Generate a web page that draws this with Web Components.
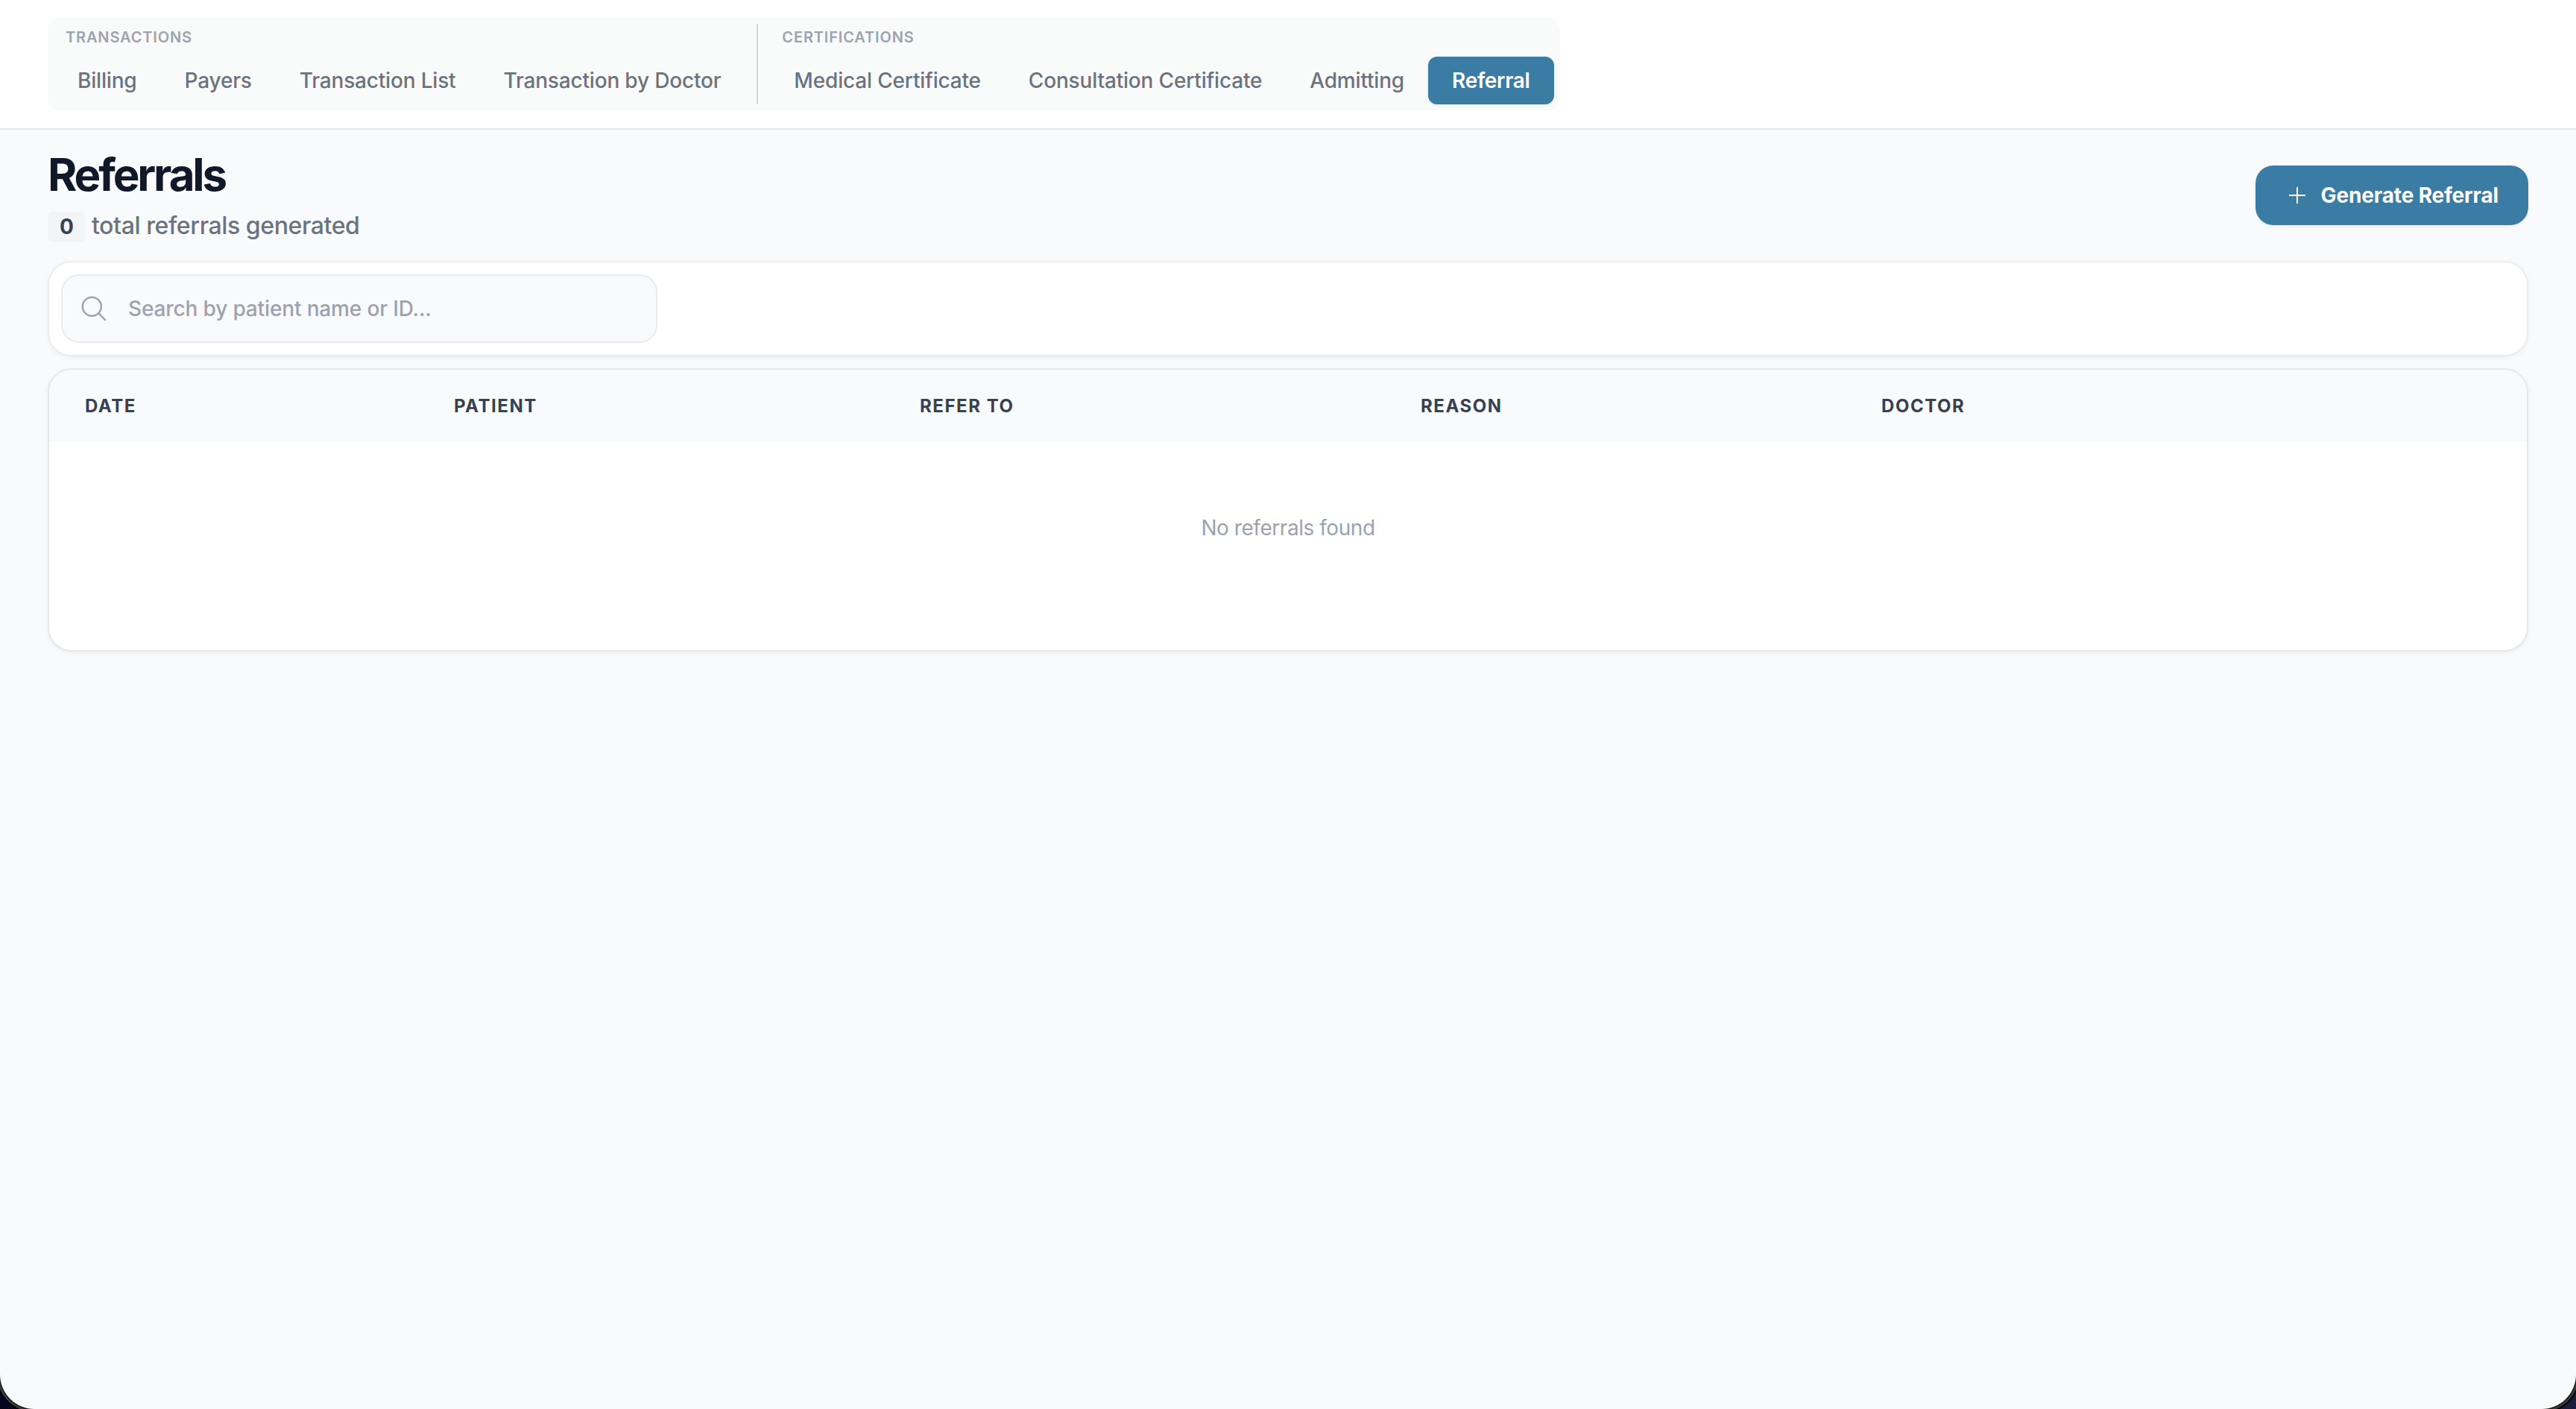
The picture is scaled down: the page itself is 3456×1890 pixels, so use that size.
<!DOCTYPE html>
<html lang="en">
<head>
<meta charset="utf-8">
<title>Referrals</title>
<style>
    html, body {
        height: 100%;
        margin: 0;
    }

    body {
        background: linear-gradient(90deg, #05051f, #1b1d3c);
        font-family: Inter, "Liberation Sans", sans-serif;
        overflow: hidden;
    }
</style>
</head>
<body>
<app-window>
    <top-nav slot="nav">
        <nav-group label="Transactions">
            <nav-tab>Billing</nav-tab>
            <nav-tab>Payers</nav-tab>
            <nav-tab>Transaction List</nav-tab>
            <nav-tab>Transaction by Doctor</nav-tab>
        </nav-group>
        <nav-group label="Certifications">
            <nav-tab>Medical Certificate</nav-tab>
            <nav-tab>Consultation Certificate</nav-tab>
            <nav-tab>Admitting</nav-tab>
            <nav-tab active>Referral</nav-tab>
        </nav-group>
    </top-nav>
    <page-header count="0">
        Referrals
        <span slot="summary">total referrals generated</span>
        <action-button slot="action">Generate Referral</action-button>
    </page-header>
    <filter-bar>
        <search-field>Search by patient name or ID...</search-field>
    </filter-bar>
    <referral-table></referral-table>
</app-window>

<script>
class AppWindow extends HTMLElement {

    constructor() {
        super();
        this.shadowDOM = this.attachShadow({mode: "open"});
    }

    connectedCallback(){
        this.shadowDOM.innerHTML = `
       <style>
       :host {
           display: flex;
           flex-direction: column;
           box-sizing: border-box;
           height: 100vh;
           background: #f9fafc;
           border-radius: 0 0 46px 46px;
           box-shadow: 0 0 0 1px #000, 0 0 0 4px #3a3b3e, 0 0 0 6px #000;
           overflow: hidden;
       }

       main {
           display: flex;
           flex-direction: column;
           gap: 16px;
           padding: 26px 64px 0;
       }
       </style>
       <slot name="nav"></slot>
       <main><slot></slot></main>
       `;
    }
}

class TopNav extends HTMLElement {

    constructor() {
        super();
        this.shadowDOM = this.attachShadow({mode: "open"});
    }

    connectedCallback(){
        this.shadowDOM.innerHTML = `
       <style>
       :host {
           display: flex;
           padding: 24px 64px;
           background: #fff;
           border-bottom: 2px solid #e5e7eb;
       }

       nav {
           display: flex;
           padding: 8px;
           border-radius: 16px;
           background: #f9fbfa;
       }

       ::slotted(nav-group:not(:first-child)) {
           margin-left: 16px;
           padding-left: 16px;
           border-left: 2px solid #d1d5db;
       }
       </style>
       <nav><slot></slot></nav>
       `;
    }
}

class NavGroup extends HTMLElement {

    constructor() {
        super();
        this.shadowDOM = this.attachShadow({mode: "open"});
    }

    connectedCallback(){
        this.shadowDOM.innerHTML = `
       <style>
       :host {
           display: flex;
           flex-direction: column;
           gap: 8px;
       }

       .label {
           padding: 0 16px;
           font-size: 20px;
           font-weight: 600;
           line-height: 36px;
           letter-spacing: .85px;
           text-transform: uppercase;
           color: #9ca3af;
       }

       .tabs {
           display: flex;
       }
       </style>
       <div class="label">${this.getAttribute("label")}</div>
       <div class="tabs"><slot></slot></div>
       `;
    }
}

class NavTab extends HTMLElement {

    constructor() {
        super();
        this.shadowDOM = this.attachShadow({mode: "open"});
    }

    connectedCallback(){
        this.shadowDOM.innerHTML = `
       <style>
       :host {
           display: block;
           padding: 0 32px;
           border-radius: 12px;
           font-size: 28px;
           font-weight: 500;
           line-height: 64px;
           letter-spacing: -.18px;
           white-space: nowrap;
           color: #6b7280;
           cursor: pointer;
       }

       :host([active]) {
           background: #3b7ca5;
           color: #fff;
           font-weight: 600;
           letter-spacing: -.3px;
           box-shadow: 0 2px 4px rgba(0, 0, 0, .05);
       }
       </style>
       <slot></slot>
       `;
    }
}

class PageHeader extends HTMLElement {

    constructor() {
        super();
        this.shadowDOM = this.attachShadow({mode: "open"});
    }

    connectedCallback(){
        this.shadowDOM.innerHTML = `
       <style>
       :host {
           display: flex;
           align-items: center;
           justify-content: space-between;
           height: 124px;
           margin-bottom: 10px;
       }

       h1 {
           margin: 0;
           font-size: 60px;
           font-weight: 700;
           line-height: 70px;
           letter-spacing: -3.1px;
           color: #111827;
       }

       .summary {
           display: flex;
           align-items: baseline;
           gap: 8px;
           margin: 10px 0 -2px;
           font-size: 32px;
           font-weight: 500;
           line-height: 48px;
           letter-spacing: -.4px;
           color: #6b7280;
       }

       .count {
           padding: 0 16px;
           border-radius: 8px;
           background: #f3f4f6;
           font-size: 28px;
           font-weight: 700;
           line-height: 41px;
           letter-spacing: 0;
           color: #374151;
       }
       </style>
       <div>
           <h1><slot></slot></h1>
           <div class="summary">
               <span class="count">${this.getAttribute("count")}</span>
               <slot name="summary"></slot>
           </div>
       </div>
       <slot name="action"></slot>
       `;
    }
}

class ActionButton extends HTMLElement {

    constructor() {
        super();
        this.shadowDOM = this.attachShadow({mode: "open"});
    }

    connectedCallback(){
        this.shadowDOM.innerHTML = `
       <style>
       :host {
           display: block;
       }

       button {
           display: flex;
           align-items: center;
           gap: 16px;
           height: 80px;
           padding: 0 40px;
           border: 0;
           border-radius: 24px;
           background: #3b7ca5;
           box-shadow: 0 2px 4px rgba(0, 0, 0, .05);
           color: #fff;
           font: 700 28px/40px Inter, "Liberation Sans", sans-serif;
           letter-spacing: -.14px;
           white-space: nowrap;
           cursor: pointer;
       }
       </style>
       <button type="button">
           <svg width="32" height="32" viewBox="0 0 32 32" fill="none" stroke="currentColor" stroke-width="2">
               <path d="M16 5v22M5 16h22"/>
           </svg>
           <slot></slot>
       </button>
       `;
    }
}

class FilterBar extends HTMLElement {

    constructor() {
        super();
        this.shadowDOM = this.attachShadow({mode: "open"});
    }

    connectedCallback(){
        this.shadowDOM.innerHTML = `
       <style>
       :host {
           display: flex;
           padding: 16px;
           border: 2px solid #ebedf1;
           border-radius: 32px;
           background: #fff;
           box-shadow: 0 2px 6px rgba(0, 0, 0, .05);
       }
       </style>
       <slot></slot>
       `;
    }
}

class SearchField extends HTMLElement {

    constructor() {
        super();
        this.shadowDOM = this.attachShadow({mode: "open"});
    }

    connectedCallback(){
        this.shadowDOM.innerHTML = `
       <style>
       :host {
           display: flex;
           align-items: center;
           gap: 26px;
           box-sizing: border-box;
           width: 800px;
           height: 92px;
           padding: 0 24px;
           border: 2px solid #e9ebf0;
           border-radius: 24px;
           background: #f9fafc;
           font-size: 28px;
           font-weight: 500;
           letter-spacing: -.14px;
           color: #9ca3af;
           cursor: text;
       }
       </style>
       <svg width="38" height="38" viewBox="0 0 38 38" fill="none" stroke="currentColor" stroke-width="2.4">
           <circle cx="15.3" cy="16.3" r="12.5"/>
           <path d="M24.2 25.2L33.8 34.8"/>
       </svg>
       <span><slot></slot></span>
       `;
    }
}

class ReferralTable extends HTMLElement {

    constructor() {
        super();
        this.shadowDOM = this.attachShadow({mode: "open"});
    }

    connectedCallback(){
        this.shadowDOM.innerHTML = `
       <style>
       :host {
           display: block;
           box-sizing: border-box;
           height: 380px;
           border: 2px solid #e5e7eb;
           border-radius: 32px;
           background: #fff;
           box-shadow: 0 2px 6px rgba(0, 0, 0, .05);
           overflow: hidden;
       }

       .head {
           display: grid;
           grid-template-columns: 495px 625px 672px 618px 1fr;
           padding-top: 1px;
           background: #f9fafc;
           font-size: 24px;
           font-weight: 700;
           line-height: 95px;
           letter-spacing: 1.55px;
           text-transform: uppercase;
           color: #374151;
       }

       .head > span {
           padding-left: 48px;
       }

       .empty {
           padding-top: 96px;
           font-size: 28px;
           line-height: 40px;
           letter-spacing: -.45px;
           text-align: center;
           color: #9ca3af;
       }
       </style>
       <div class="head">
           <span>Date</span>
           <span>Patient</span>
           <span>Refer To</span>
           <span>Reason</span>
           <span>Doctor</span>
       </div>
       <div class="empty">No referrals found</div>
       `;
    }
}

customElements.define("app-window", AppWindow);
customElements.define("top-nav", TopNav);
customElements.define("nav-group", NavGroup);
customElements.define("nav-tab", NavTab);
customElements.define("page-header", PageHeader);
customElements.define("action-button", ActionButton);
customElements.define("filter-bar", FilterBar);
customElements.define("search-field", SearchField);
customElements.define("referral-table", ReferralTable);
</script>
</body>
</html>
